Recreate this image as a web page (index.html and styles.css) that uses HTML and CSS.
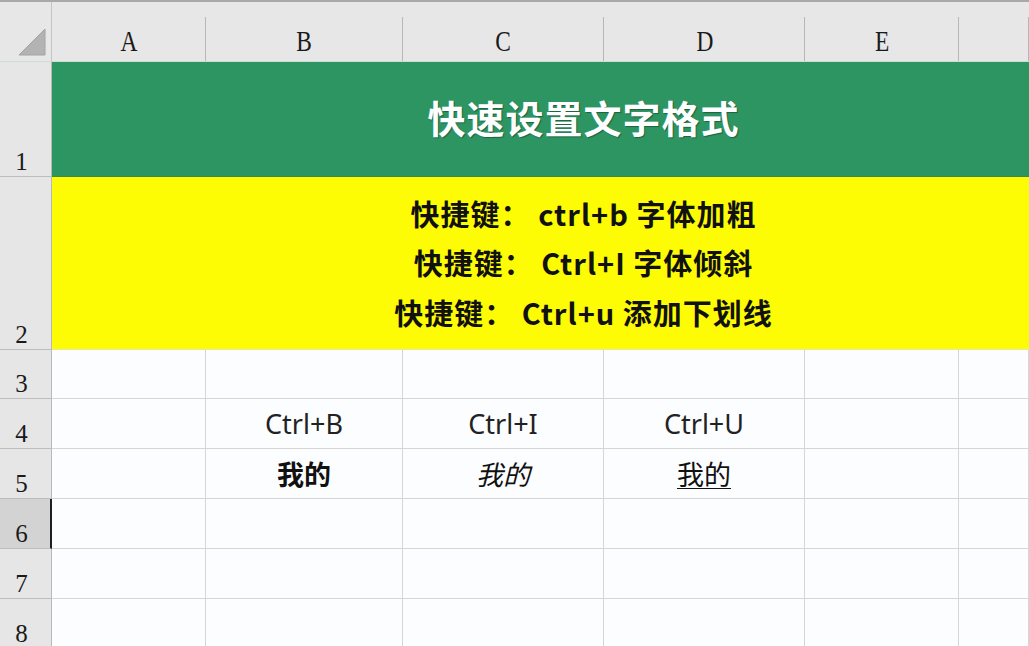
FILE: index.html
```html
<!DOCTYPE html>
<html lang="zh-CN">
<head>
<meta charset="utf-8">
<title>快速设置文字格式</title>
<link rel="stylesheet" href="styles.css">
</head>
<body>
<div class="topline"></div>
<div class="sheet">
  <div class="corner"><svg width="52" height="60" viewBox="0 0 52 60"><polygon points="45,27 45,53 19,53" fill="#b3b3b3" stroke="#a3a3a3" stroke-width="1"/></svg></div>
  <div class="colh"><span>A</span></div>
  <div class="colh"><span>B</span></div>
  <div class="colh"><span>C</span></div>
  <div class="colh"><span>D</span></div>
  <div class="colh"><span>E</span></div>
  <div class="colh"><span></span></div>

  <div class="rowh">1</div>
  <div class="merged title">快速设置文字格式</div>

  <div class="rowh">2</div>
  <div class="merged notes">
    <p>快捷键： ctrl+b 字体加粗</p>
    <p>快捷键： Ctrl+I 字体倾斜</p>
    <p>快捷键： Ctrl+u 添加下划线</p>
  </div>

  <div class="rowh">3</div>
  <div class="cell"></div><div class="cell"></div><div class="cell"></div><div class="cell"></div><div class="cell"></div><div class="cell"></div>

  <div class="rowh">4</div>
  <div class="cell"></div><div class="cell txt">Ctrl+B</div><div class="cell txt">Ctrl+I</div><div class="cell txt">Ctrl+U</div><div class="cell"></div><div class="cell"></div>

  <div class="rowh">5</div>
  <div class="cell"></div><div class="cell cjk bold">我的</div><div class="cell cjk ital">我的</div><div class="cell cjk under">我的</div><div class="cell"></div><div class="cell"></div>

  <div class="rowh sel">6</div>
  <div class="cell"></div><div class="cell"></div><div class="cell"></div><div class="cell"></div><div class="cell"></div><div class="cell"></div>

  <div class="rowh">7</div>
  <div class="cell"></div><div class="cell"></div><div class="cell"></div><div class="cell"></div><div class="cell"></div><div class="cell"></div>

  <div class="rowh">8</div>
  <div class="cell"></div><div class="cell"></div><div class="cell"></div><div class="cell"></div><div class="cell"></div><div class="cell"></div>
</div>
</body>
</html>
```
FILE: styles.css
```css
html, body {
  margin: 0;
  padding: 0;
  width: 1029px;
  height: 646px;
  overflow: hidden;
  background: #fcfdff;
}

.topline {
  height: 2px;
  background: #a9a9a9;
}

.sheet {
  display: grid;
  width: 1029px;
  grid-template-columns: 52px 154px 197px 201px 201px 154px 70px;
  grid-template-rows: 60px 115px 173px 49px 50px 50px 50px 50px 50px;
  font-family: "Noto Sans", "Noto Sans CJK SC", sans-serif;
}

.corner {
  background: #e7e7e7;
  border-right: 1px solid #c4c4c4;
  border-bottom: 1px solid #cfded4;
  box-sizing: border-box;
}
.corner svg { display: block; }

.colh {
  background: linear-gradient(#b7b7b7, #b7b7b7) right bottom / 1px 44px no-repeat, #e7e7e7;
  border-bottom: 1px solid #cfded4;
  box-sizing: border-box;
  display: flex;
  align-items: flex-end;
  justify-content: center;
  padding-bottom: 5px;
  font-family: "Liberation Serif", serif;
  font-size: 30px;
  line-height: 30px;
  color: #1a1a1a;
}
.colh span {
  display: inline-block;
  transform: scaleX(0.78);
}

.rowh {
  grid-column: 1;
  background: #e6e6e6;
  border-right: 1px solid #b9b9b9;
  border-bottom: 1px solid #bdbdbd;
  box-sizing: border-box;
  display: flex;
  align-items: flex-end;
  justify-content: center;
  padding-right: 8px;
  padding-bottom: 1px;
  font-family: "Liberation Serif", serif;
  font-size: 25px;
  line-height: 26px;
  color: #1a1a1a;
}
.rowh.sel {
  background: #d3d3d3;
  border-right: 2px solid #1f1f1f;
  padding-right: 7px;
}

.merged {
  grid-column: 2 / -1;
  display: flex;
  flex-direction: column;
  align-items: center;
  justify-content: center;
  box-sizing: border-box;
  padding-left: 86px;
  font-family: "Noto Sans CJK SC", sans-serif;
}

.title {
  background: #2d9562;
  border-bottom: 1px solid #3b8a4c;
  color: #ffffff;
  font-size: 38px;
  font-weight: 700;
  letter-spacing: 1px;
  text-shadow: 1px 1px 1px rgba(0, 0, 0, 0.35);
  padding-bottom: 6px;
}

.notes {
  background: #fdfc04;
  border-bottom: 1px solid #e9e7a8;
  color: #111111;
  font-size: 29px;
  font-weight: 700;
  letter-spacing: 1px;
}
.notes p {
  margin: 0;
  line-height: 49.5px;
}

.cell {
  border-right: 1px solid #d6d6d6;
  border-bottom: 1px solid #d6d6d6;
  box-sizing: border-box;
  display: flex;
  align-items: center;
  justify-content: center;
  color: #222222;
}

.txt {
  font-family: "Noto Sans", sans-serif;
  font-size: 27px;
}

.cjk {
  font-family: "Noto Sans CJK SC", sans-serif;
  font-size: 27px;
  color: #111111;
}
.bold { font-weight: 700; }
.ital { font-style: italic; }
.under {
  text-decoration: underline;
  text-decoration-thickness: 1px;
  text-underline-offset: 3px;
}
```
